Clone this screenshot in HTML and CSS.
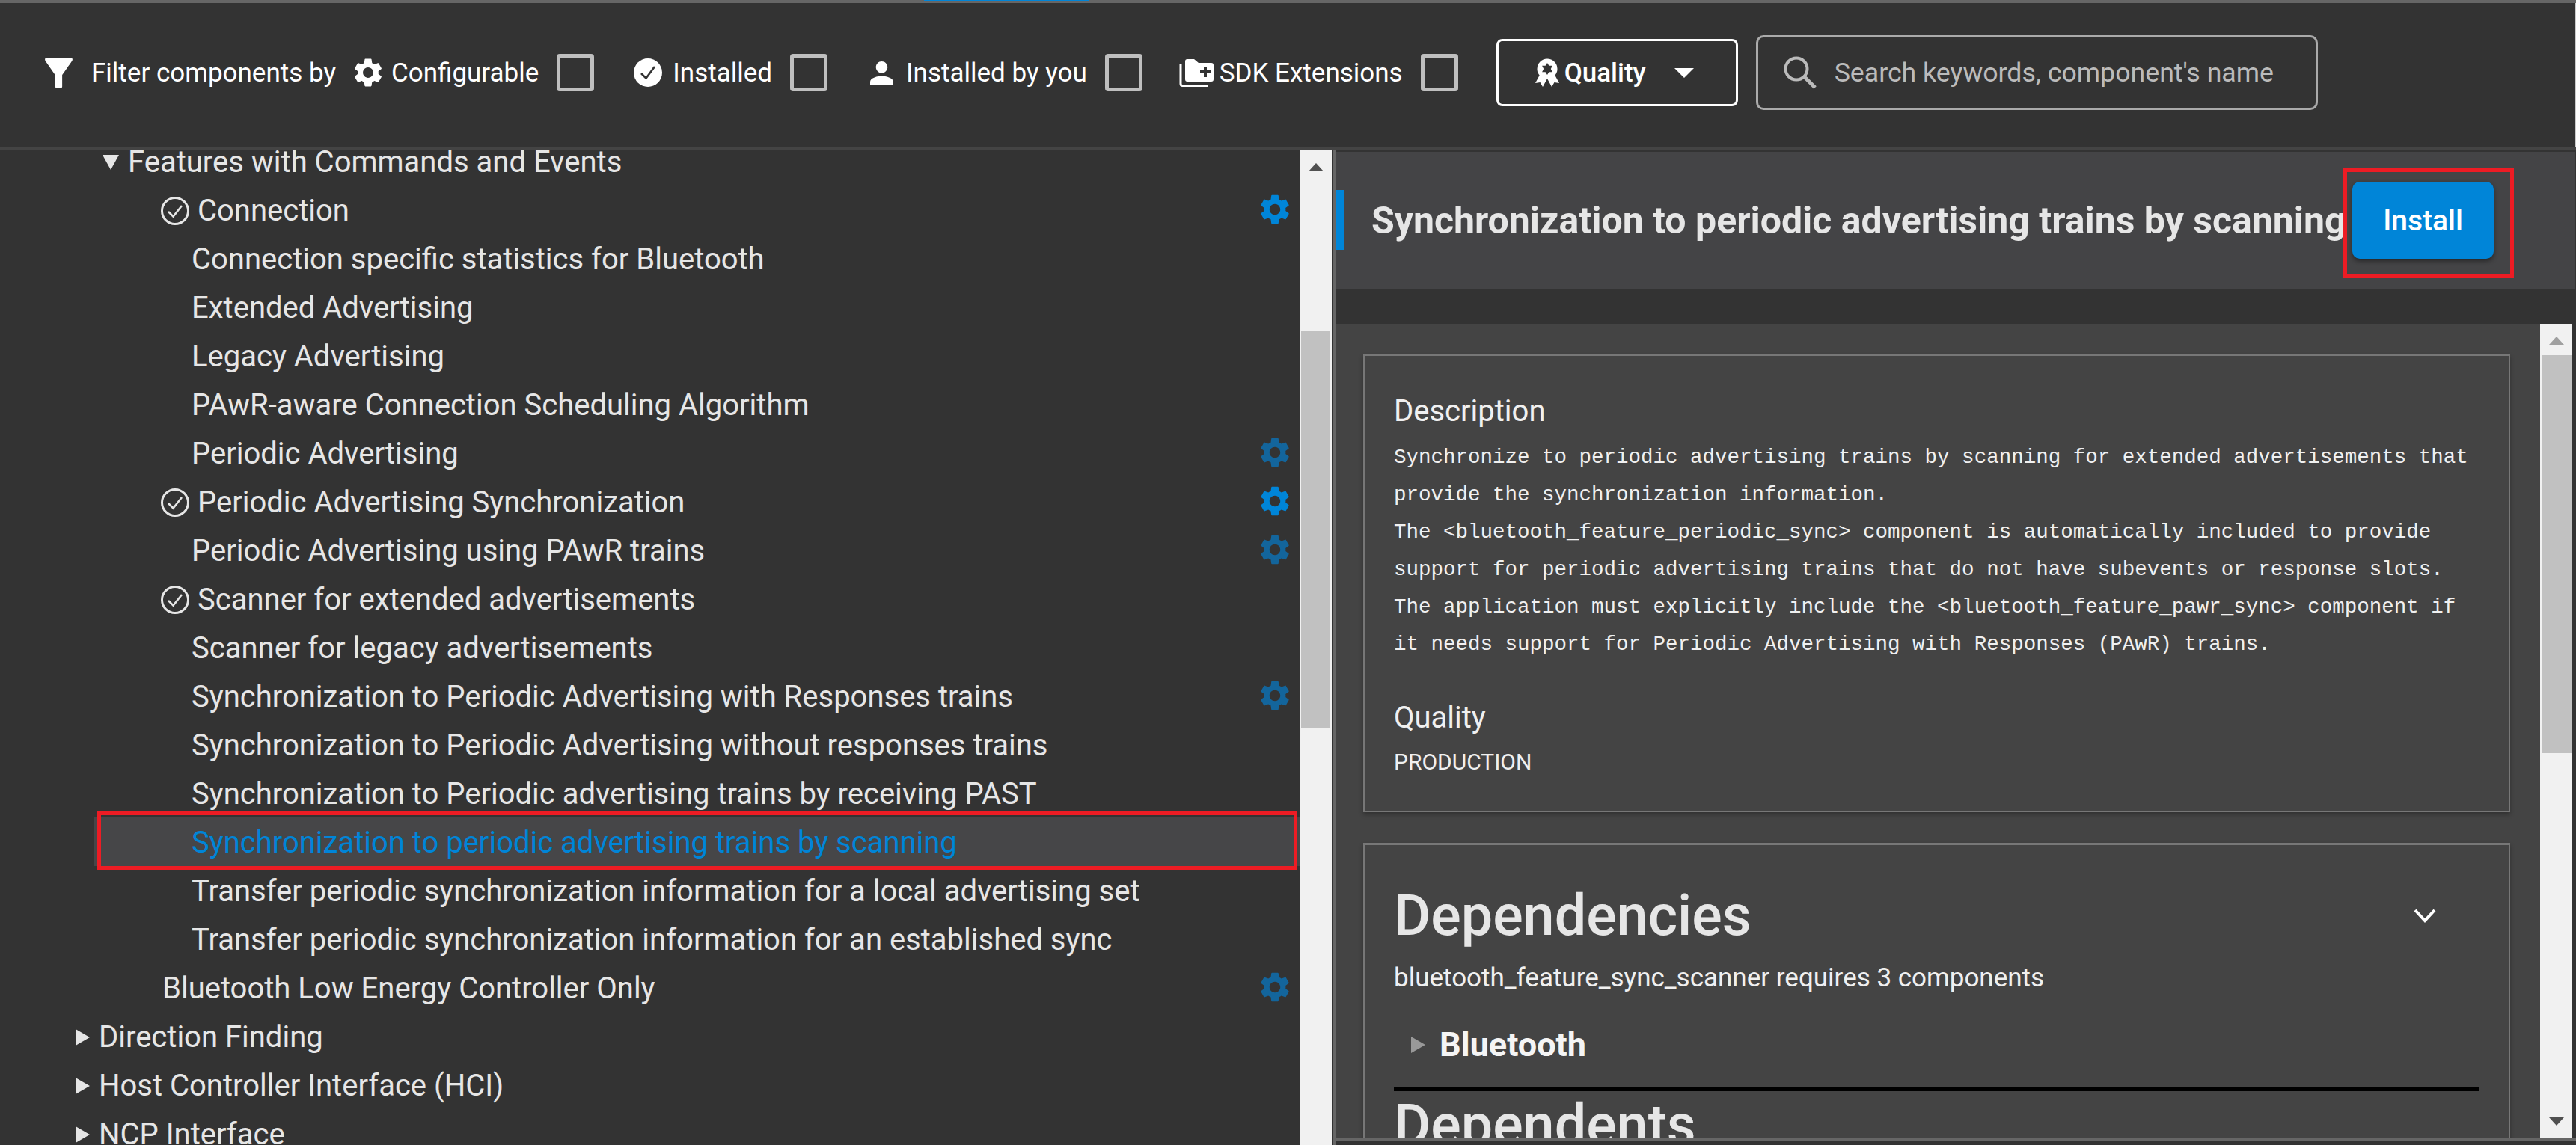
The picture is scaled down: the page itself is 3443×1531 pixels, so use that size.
FILE: index.html
```html
<!DOCTYPE html>
<html lang="en">

<head>
    <meta charset="UTF-8">
    <title>Software Components</title>
    <link rel="stylesheet" href="styles.css">
</head>

<body>
    <svg class="sprite" xmlns="http://www.w3.org/2000/svg">
        <symbol id="i-gear" viewBox="0 0 24 24">
            <path fill="currentColor" d="M19.14 12.94c.04-.3.06-.61.06-.94 0-.32-.02-.64-.07-.94l2.03-1.58c.18-.14.23-.41.12-.61l-1.92-3.32c-.12-.22-.37-.29-.59-.22l-2.39.96c-.5-.38-1.03-.7-1.62-.94l-.36-2.54c-.04-.24-.24-.41-.48-.41h-3.84c-.24 0-.43.17-.47.41l-.36 2.54c-.59.24-1.13.57-1.62.94l-2.39-.96c-.22-.08-.47 0-.59.22L2.74 8.87c-.12.21-.08.47.12.61l2.03 1.58c-.05.3-.09.63-.09.94s.02.64.07.94l-2.03 1.58c-.18.14-.23.41-.12.61l1.92 3.32c.12.22.37.29.59.22l2.39-.96c.5.38 1.03.7 1.62.94l.36 2.54c.05.24.24.41.48.41h3.84c.24 0 .44-.17.47-.41l.36-2.54c.59-.24 1.13-.56 1.62-.94l2.39.96c.22.08.47 0 .59-.22l1.92-3.32c.12-.22.07-.47-.12-.61l-2.01-1.58zM12 15.6c-1.98 0-3.6-1.62-3.6-3.6s1.62-3.6 3.6-3.6 3.6 1.62 3.6 3.6-1.62 3.6-3.6 3.6z" />
        </symbol>
        <symbol id="i-check" viewBox="0 0 38 38">
            <circle cx="19" cy="19" r="17.5" fill="none" stroke="currentColor" stroke-width="3" />
            <path fill="none" stroke="currentColor" stroke-width="2.6" d="M10 20l6.5 6.5L28 12" />
        </symbol>
    </svg>

    <div id="app">
        <div class="topline"><span class="progress"></span></div>

        <div class="toolbar">
            <svg class="ico-filter" viewBox="4 4 16 16" preserveAspectRatio="none">
                <path fill="#fff" d="M4.25 5.61C6.27 8.2 10 13 10 13v6c0 .55.45 1 1 1h2c.55 0 1-.45 1-1v-6s3.72-4.8 5.74-7.39c.51-.66.04-1.61-.79-1.61H5.04c-.83 0-1.3.95-.79 1.61z" />
            </svg>
            <span class="filter-title">Filter components by</span>

            <label class="filter filter-config">
                <svg class="ico-gear"><use href="#i-gear" /></svg>
                <span>Configurable</span>
                <i class="box"></i>
            </label>
            <label class="filter filter-installed">
                <svg class="ico-done" viewBox="0 0 38 38">
                    <circle cx="19" cy="19" r="19" fill="#fff" />
                    <path fill="none" stroke="#333" stroke-width="2.6" d="M10 20l6.5 6.5L28 11" />
                </svg>
                <span>Installed</span>
                <i class="box"></i>
            </label>
            <label class="filter filter-you">
                <svg class="ico-person" viewBox="4 4 16 16">
                    <path fill="#fff" d="M12 12c2.21 0 4-1.79 4-4s-1.79-4-4-4-4 1.79-4 4 1.79 4 4 4zm0 2c-2.67 0-8 1.34-8 4v2h16v-2c0-2.66-5.33-4-8-4z" />
                </svg>
                <span>Installed by you</span>
                <i class="box"></i>
            </label>
            <label class="filter filter-sdk">
                <svg class="ico-sdk" viewBox="0 0 46 37">
                    <path fill="none" stroke="#fff" stroke-width="3" d="M2 7v26a2.500 2.500 0 0 0 2.500 2.500H39" />
                    <path fill="#fff" fill-rule="evenodd" d="M8 3a3 3 0 0 1 3-3h9l6 5h17a3 3 0 0 1 3 3v19a3 3 0 0 1-3 3H11a3 3 0 0 1-3-3zM33 10v5h-5v4h5v5h4v-5h5v-4h-5v-5z" />
                </svg>
                <span>SDK Extensions</span>
                <i class="box"></i>
            </label>

            <button class="quality">
                <svg class="ico-award" viewBox="0 0 32 38">
                    <path fill="#fff" d="M6 22L0 33l6.500-1L10 38l6-11 6 11 3.500-6 6.500 1-6-11z" />
                    <circle cx="16" cy="14" r="13.500" fill="#fff" />
                    <path fill="#333" d="M16 6l2.400 3.800 4.500-.0-2.100 4.200 2.100 4.200-4.500-.0L16 22l-2.400-3.800-4.500 0 2.100-4.200-2.100-4.200 4.500 0z" />
                </svg>
                <span>Quality</span>
                <i class="caret"></i>
            </button>

            <div class="search">
                <svg class="ico-search" viewBox="0 0 44 44">
                    <circle cx="17" cy="17" r="14.500" fill="none" stroke="#bbb" stroke-width="4" />
                    <path stroke="#bbb" stroke-width="5" d="M27 27l15 15" />
                </svg>
                <span>Search keywords, component's name</span>
            </div>
        </div>

        <div class="main">
            <div class="tree-pane">
                <ul class="tree">
                    <li class="row lvl-1"><i class="tri tri-down"></i>Features with Commands and Events</li>
                    <li class="row lvl-2 has-check"><svg class="ico-check"><use href="#i-check" /></svg>Connection<svg class="cfg on"><use href="#i-gear" /></svg></li>
                    <li class="row lvl-3">Connection specific statistics for Bluetooth</li>
                    <li class="row lvl-3">Extended Advertising</li>
                    <li class="row lvl-3">Legacy Advertising</li>
                    <li class="row lvl-3">PAwR-aware Connection Scheduling Algorithm</li>
                    <li class="row lvl-3">Periodic Advertising<svg class="cfg"><use href="#i-gear" /></svg></li>
                    <li class="row lvl-2 has-check"><svg class="ico-check"><use href="#i-check" /></svg>Periodic Advertising Synchronization<svg class="cfg on"><use href="#i-gear" /></svg></li>
                    <li class="row lvl-3">Periodic Advertising using PAwR trains<svg class="cfg"><use href="#i-gear" /></svg></li>
                    <li class="row lvl-2 has-check"><svg class="ico-check"><use href="#i-check" /></svg>Scanner for extended advertisements</li>
                    <li class="row lvl-3">Scanner for legacy advertisements</li>
                    <li class="row lvl-3">Synchronization to Periodic Advertising with Responses trains<svg class="cfg"><use href="#i-gear" /></svg></li>
                    <li class="row lvl-3">Synchronization to Periodic Advertising without responses trains</li>
                    <li class="row lvl-3">Synchronization to Periodic advertising trains by receiving PAST</li>
                    <li class="row lvl-3 selected">Synchronization to periodic advertising trains by scanning<i class="mark"></i></li>
                    <li class="row lvl-3">Transfer periodic synchronization information for a local advertising set</li>
                    <li class="row lvl-3">Transfer periodic synchronization information for an established sync</li>
                    <li class="row lvl-2">Bluetooth Low Energy Controller Only<svg class="cfg"><use href="#i-gear" /></svg></li>
                    <li class="row lvl-0"><i class="tri"></i>Direction Finding</li>
                    <li class="row lvl-0"><i class="tri"></i>Host Controller Interface (HCI)</li>
                    <li class="row lvl-0"><i class="tri"></i>NCP Interface</li>
                </ul>
                <div class="scrollbar tree-scroll">
                    <i class="arrow-up"></i>
                    <i class="thumb"></i>
                </div>
            </div>

            <div class="detail">
                <div class="detail-head">
                    <h1>Synchronization to periodic advertising trains by scanning</h1>
                    <div class="install-wrap">
                        <button class="install">Install</button>
                        <i class="mark"></i>
                    </div>
                </div>

                <div class="detail-body">
                    <div class="cards">
                        <section class="card card-info">
                            <h3>Description</h3>
                            <p class="mono">Synchronize to periodic advertising trains by scanning for extended advertisements that provide the synchronization information.<br>The &lt;bluetooth_feature_periodic_sync&gt; component is automatically included to provide support for periodic advertising trains that do not have subevents or response slots.<br>The application must explicitly include the &lt;bluetooth_feature_pawr_sync&gt; component if it needs support for Periodic Advertising with Responses (PAwR) trains.</p>
                            <h3 class="quality-title">Quality</h3>
                            <p class="small">PRODUCTION</p>
                        </section>
                        <section class="card card-deps">
                            <div class="deps-head">
                                <h2>Dependencies</h2>
                                <svg class="chevron" viewBox="0 0 30 20">
                                    <path fill="none" stroke="#fff" stroke-width="4" d="M2 2l13 14L28 2" />
                                </svg>
                            </div>
                            <p class="requires">bluetooth_feature_sync_scanner requires 3 components</p>
                            <div class="dep-group"><i class="tri tri-dim"></i>Bluetooth</div>
                            <hr class="rule">
                            <h2 class="dependents">Dependents</h2>
                        </section>
                    </div>
                    <div class="scrollbar body-scroll">
                        <i class="arrow-up"></i>
                        <i class="thumb"></i>
                        <i class="arrow-down"></i>
                    </div>
                </div>
                <div class="detail-foot"></div>
            </div>
        </div>
    </div>
</body>

</html>
```

FILE: styles.css
```css
* {
    margin: 0;
    padding: 0;
    box-sizing: border-box;
    font-family: 'Roboto', sans-serif;
}

html,
body {
    height: 100%;
    overflow: hidden;
    background-color: #333;
}

.sprite {
    display: none;
}

#app {
    height: 1531px;
    display: flex;
    flex-direction: column;
    color: #e6e6e6;
}

.topline {
    height: 4px;
    flex: none;
    background-color: #666;
    padding-left: 1235px;
}

.topline .progress {
    display: block;
    width: 220px;
    height: 1px;
    background-color: #0085d8;
}

/* toolbar */

.toolbar {
    height: 192px;
    flex: none;
    display: flex;
    align-items: center;
    padding-left: 60px;
    padding-bottom: 6px;
    color: #fff;
    font-size: 35px;
    border-right: 2px solid #ccc;
}

.ico-filter {
    width: 37px;
    height: 41px;
    margin-right: 25px;
}

.filter-title {
    margin-right: 20px;
}

.filter {
    display: flex;
    align-items: center;
}

.filter .box {
    display: block;
    width: 50px;
    height: 50px;
    border: 5px solid #bfbfbf;
    border-radius: 4px;
    margin-left: 24px;
}

.ico-gear {
    width: 46px;
    height: 46px;
    margin-right: 8px;
}

.filter-installed {
    margin-left: 53px;
}

.ico-done {
    width: 38px;
    height: 38px;
    margin-right: 14px;
}

.filter-you {
    margin-left: 57px;
}

.ico-person {
    width: 31px;
    height: 31px;
    margin-right: 17px;
}

.filter-sdk {
    margin-left: 49px;
}

.ico-sdk {
    width: 46px;
    height: 37px;
    margin-right: 8px;
}

.quality {
    width: 323px;
    height: 90px;
    margin-left: 51px;
    display: flex;
    align-items: center;
    padding-left: 49px;
    background: none;
    border: 3px solid #fff;
    border-radius: 8px;
    color: #fff;
    font-size: 35px;
    font-weight: 500;
}

.ico-award {
    width: 32px;
    height: 38px;
    margin-right: 7px;
}

.caret {
    margin-left: 38px;
    border-left: 13px solid transparent;
    border-right: 13px solid transparent;
    border-top: 13px solid #fff;
}

.search {
    width: 751px;
    height: 100px;
    margin-left: 24px;
    display: flex;
    align-items: center;
    padding-left: 34px;
    border: 3px solid #aaa;
    border-radius: 10px;
    color: #bbb;
    font-size: 35.700px;
}

.ico-search {
    width: 44px;
    height: 44px;
    margin-right: 24px;
}

/* main split */

.main {
    flex: 1;
    min-height: 0;
    display: flex;
    border-top: 5px solid #444;
}

.tree-pane {
    width: 1780px;
    flex: none;
    display: flex;
    overflow: hidden;
}

.tree {
    flex: 1;
    min-width: 0;
    list-style: none;
    margin-top: -18px;
    font-size: 40px;
}

.row {
    height: 65px;
    padding-top: 2px;
    display: flex;
    align-items: center;
    position: relative;
    white-space: nowrap;
}

.lvl-0 {
    padding-left: 101px;
}

.lvl-1 {
    padding-left: 137px;
}

.lvl-2 {
    padding-left: 217px;
}

.lvl-3 {
    padding-left: 256px;
}

.tri {
    flex: none;
    margin-right: 12px;
    border-top: 11px solid transparent;
    border-bottom: 11px solid transparent;
    border-left: 19px solid #e6e6e6;
}

.tri-down {
    margin-right: 12px;
    border-left: 11.500px solid transparent;
    border-right: 11.500px solid transparent;
    border-top: 20px solid #e6e6e6;
    border-bottom: 0;
}

.ico-check {
    width: 38px;
    height: 38px;
    margin-left: -2px;
    margin-right: 11px;
    flex: none;
}

.cfg {
    position: absolute;
    left: 1680px;
    top: 8px;
    width: 48px;
    height: 48px;
    color: #13659c;
}

.cfg.on {
    color: #0085d8;
}

.selected {
    margin-left: 126px;
    padding-left: 130px;
    background-color: #464648;
    color: #0085d8;
}

.mark {
    position: absolute;
    border: 5px solid #ed1c24;
}

.selected .mark {
    top: -8px;
    bottom: -5px;
    left: 4px;
    right: 3px;
}

/* scrollbars */

.scrollbar {
    flex: none;
    position: relative;
    background-color: #f1f1f1;
}

.tree-scroll {
    width: 43px;
}

.arrow-up,
.arrow-down {
    position: absolute;
    left: 50%;
    margin-left: -10px;
    border-left: 10px solid transparent;
    border-right: 10px solid transparent;
}

.arrow-up {
    top: 17px;
    border-bottom: 11px solid #505050;
}

.arrow-down {
    bottom: 17px;
    border-top: 11px solid #505050;
}

.scrollbar .thumb {
    position: absolute;
    background-color: #c1c1c1;
}

.tree-scroll .thumb {
    left: 2px;
    right: 3px;
    top: 242px;
    height: 531px;
}

/* right side */

.detail {
    flex: 1;
    min-width: 0;
    display: flex;
    flex-direction: column;
    margin-left: 2px;
    border-left: 3px solid #666;
    padding-top: 2px;
    background-color: #333;
}

.detail-head {
    height: 183px;
    flex: none;
    display: flex;
    align-items: center;
    padding-left: 48px;
    background-color: #444446;
    position: relative;
    margin-right: 2px;
}

.detail-head::before {
    content: "";
    position: absolute;
    left: 0;
    top: 51px;
    width: 11px;
    height: 80px;
    background-color: #0085d8;
}

.detail-head h1 {
    width: 1299px;
    flex: none;
    font-size: 50px;
    font-weight: 700;
    color: #e6e6e6;
    white-space: nowrap;
}

.install-wrap {
    position: relative;
    margin-left: 12px;
}

.install {
    display: block;
    width: 189px;
    height: 103px;
    border: 0;
    border-radius: 10px;
    background-color: #0085d8;
    box-shadow: 0 3px 6px rgba(0, 0, 0, 0.45);
    color: #fff;
    font-size: 39px;
    font-weight: 500;
}

.install-wrap .mark {
    top: -18px;
    bottom: -26px;
    left: -12px;
    right: -27px;
}

.detail-body {
    height: 1089px;
    flex: none;
    margin-top: 47px;
    display: flex;
    background-color: #444;
    overflow: hidden;
    margin-right: 5px;
}

.cards {
    flex: 1;
    min-width: 0;
    padding: 41px 40px 0 37px;
}

.card {
    border: 2px solid #777;
    padding: 0 39px;
    box-shadow: 0 3px 6px rgba(0, 0, 0, 0.3);
}

.card-info {
    height: 612px;
    padding-top: 51px;
    margin-bottom: 41px;
}

.card h3 {
    font-size: 40px;
    line-height: 46px;
    font-weight: 400;
    color: #f0f0f0;
}

.mono {
    margin-top: 14px;
    font-family: 'Liberation Mono', monospace;
    font-size: 27.500px;
    line-height: 50px;
    color: #f0f0f0;
}

.card .quality-title {
    margin-top: 50px;
}

.small {
    margin-top: 18px;
    font-size: 30px;
    line-height: 35px;
    color: #f0f0f0;
}

.card-deps {
    border-top-width: 3px;
    padding-top: 52px;
    height: 600px;
}

.card-deps h2 {
    font-size: 75.500px;
    font-weight: 500;
    line-height: 85px;
    color: #e6e6e6;
}

.deps-head {
    display: flex;
    justify-content: space-between;
    align-items: center;
    padding-right: 58px;
}

.chevron {
    width: 30px;
    height: 20px;
}

.requires {
    margin-top: 21px;
    font-size: 35px;
    line-height: 40px;
    color: #f0f0f0;
}

.dep-group {
    margin-top: 43px;
    display: flex;
    align-items: center;
    padding-left: 23px;
    font-size: 45px;
    line-height: 52px;
    font-weight: 700;
    color: #f5f5f5;
}

.tri-dim {
    margin-right: 19px;
    border-left-color: #999;
}

.rule {
    height: 5px;
    margin-top: 31px;
    border: 0;
    background-color: #000;
}

.card-deps .dependents {
    margin-top: 3px;
}

.body-scroll {
    width: 43px;
}

.body-scroll .arrow-up {
    border-bottom-color: #a0a0a0;
}

.body-scroll .thumb {
    left: 3px;
    right: 0;
    top: 42px;
    height: 532px;
}

.detail-foot {
    flex: 1;
    border-top: 3px solid #666;
    background-color: #333;
}
```
